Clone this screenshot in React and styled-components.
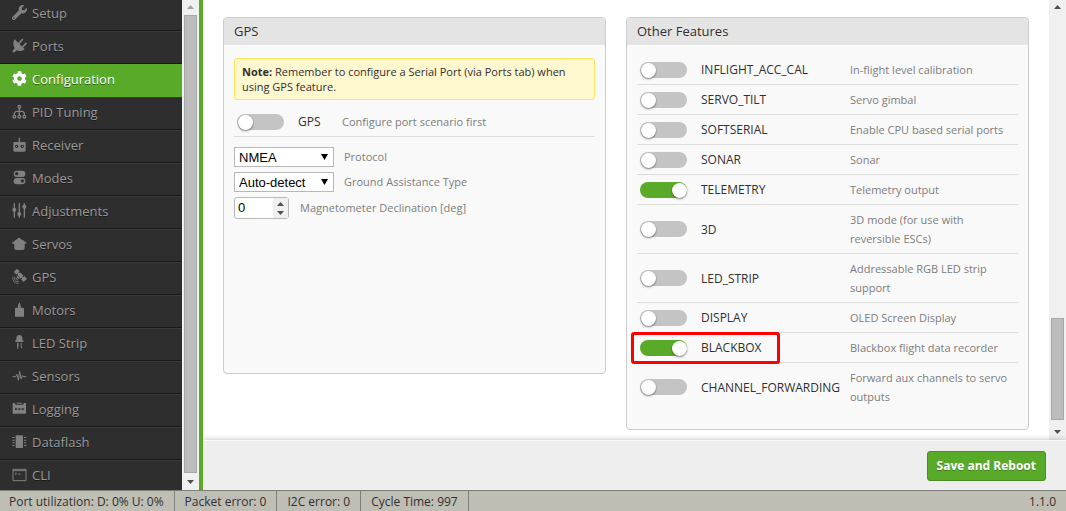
import React, { useState } from "react";
import styled, { createGlobalStyle } from "styled-components";
import { FaWrench, FaCog } from "react-icons/fa";

const GlobalStyle = createGlobalStyle`
  * {
    box-sizing: border-box;
  }

  body {
    margin: 0;
    font-family: "Open Sans", "Noto Sans", sans-serif;
    font-size: 12px;
    color: #303030;
    background: #fff;
  }
`;

const Page = styled.div`
  display: flex;
  flex-direction: column;
  height: 100vh;
  overflow: hidden;
`;

const Main = styled.div`
  display: flex;
  flex: 1;
  min-height: 0;
`;

const Sidebar = styled.div`
  display: flex;
  flex: none;
  border-right: 4px solid #59aa29;
`;

const Nav = styled.nav`
  width: 182px;
  overflow: hidden;
  background: #2e2e2e;
`;

const NavList = styled.ul`
  margin: -2px 0 0;
  padding: 0;
  list-style: none;
`;

const NavLink = styled.a`
  display: flex;
  align-items: center;
  gap: 5px;
  height: 33px;
  padding: 0 12px 4px;
  border-top: 1px solid ${props => (props.$active ? "#59aa29" : "#3b3b3b")};
  border-bottom: 1px solid ${props => (props.$active ? "#59aa29" : "#1a1a1a")};
  background: ${props => (props.$active ? "#59aa29" : "#2e2e2e")};
  color: ${props => (props.$active ? "#fff" : "#999")};
  font-size: 13px;
  text-decoration: none;
  text-shadow: 0 1px rgba(0, 0, 0, 0.45);

  svg {
    flex: none;
    width: 15px;
    height: 15px;
    color: ${props => (props.$active ? "#fff" : "#808080")};
  }
`;

const ScrollColumn = styled.div`
  display: flex;
  flex: none;
  flex-direction: column;
  width: 17px;
  background: #f0f0f0;
`;

const ScrollArrow = styled.svg`
  flex: none;
  width: 17px;
  height: 15px;
  fill: ${props => (props.$disabled ? "#a3a3a3" : "#505050")};
`;

const ScrollTrack = styled.div`
  display: flex;
  flex: 1;
  flex-direction: column;
  padding: 0 2px;
`;

const ScrollSpace = styled.div`
  flex: ${props => props.$size};
`;

const ScrollThumb = styled.div`
  flex: ${props => props.$size};
  border: 1px solid #a8a8a8;
  background: #bcbcbc;
`;

const Content = styled.main`
  display: flex;
  flex: 1;
  flex-direction: column;
  min-width: 0;
`;

const ContentScroll = styled.div`
  display: flex;
  flex: 1;
  min-height: 0;
`;

const Columns = styled.div`
  display: grid;
  flex: 1;
  grid-template-columns: 1fr 1fr;
  align-items: start;
  padding-top: 17px;
  overflow: hidden;
`;

const Panel = styled.section`
  margin: 0 20px 0 ${props => (props.$first ? "20px" : "0")};
  min-height: 357px;
  border: 1px solid #ccc;
  border-radius: 4px;
  background: #f9f9f9;
`;

const PanelTitle = styled.h2`
  margin: 0;
  padding: 0 10px;
  border-radius: 3px 3px 0 0;
  background: #e4e4e4;
  font-size: 13px;
  font-weight: 400;
  line-height: 27px;
`;

const PanelBody = styled.div`
  padding: ${props => (props.$note ? "13px" : "10px")} 10px 18px;
`;

const Note = styled.p`
  margin: 0 0 7px;
  padding: 5px 7px;
  border: 1px solid #ffe55f;
  border-radius: 3px;
  background: #fff7cd;
  font-size: 11px;
  line-height: 15px;
`;

const FeatureTable = styled.table`
  width: 100%;
  border-collapse: separate;
  border-spacing: 0;
  table-layout: fixed;

  td {
    position: relative;
    padding: 5px 0;
    border-bottom: 1px solid #ddd;
    line-height: 19px;
    vertical-align: middle;
  }

  td:last-child {
    padding-right: 5px;
  }

  tr:last-child td {
    border-bottom: ${props => (props.$closed ? "1px solid #ddd" : "0")};
  }
`;

const Col = styled.col`
  width: ${props => props.$width};
`;

const FeatureName = styled.label`
  display: block;
  font-size: 12px;
`;

const Hint = styled.span`
  color: #7d7d7d;
  font-size: 11px;
`;

const Switch = styled.input.attrs({ type: "checkbox" })`
  appearance: none;
  display: block;
  width: 47px;
  height: 16px;
  margin: 0 3px;
  padding: 1px 0 0 1px;
  border-radius: 8px;
  background: #c4c4c4;

  &::before {
    content: "";
    display: block;
    width: 15px;
    height: 15px;
    border-radius: 50%;
    background: #fff;
    box-shadow: 0 1px 2px rgba(0, 0, 0, 0.5);
  }

  &:checked {
    background: #59aa29;
  }

  &:checked::before {
    margin-left: auto;
  }
`;

const Highlight = styled.span`
  position: absolute;
  top: -1px;
  left: -6px;
  z-index: 1;
  width: 149px;
  height: 32px;
  border: 3px solid #ff0000;
  border-radius: 3px;
  pointer-events: none;
`;

const Fields = styled.div`
  display: flex;
  flex-direction: column;
  gap: 5px;
  padding-top: 10px;
`;

const Field = styled.label`
  display: flex;
  align-items: center;
  gap: ${props => (props.$number ? "11px" : "10px")};

  ${Hint} {
    padding-bottom: 2px;
  }
`;

const Control = styled.span`
  position: relative;
  display: flex;
`;

const Select = styled.select`
  appearance: none;
  width: 100px;
  height: 20px;
  padding: 0 4px;
  border: 1px solid #b8b8b8;
  border-radius: 0;
  background: #fff;
  color: #000;
  font: 13px "Liberation Sans", Arial, sans-serif;
`;

const SelectArrow = styled.svg`
  position: absolute;
  top: 7px;
  right: 6px;
  width: 7px;
  height: 6px;
  pointer-events: none;
`;

const NumberInput = styled.input.attrs({ type: "number" })`
  appearance: textfield;
  width: 55px;
  height: 22px;
  padding: 0 16px 2px 3px;
  border: 1px solid #b8b8b8;
  border-radius: 3px;
  background: #fff;
  color: #000;
  font: 13px "Liberation Sans", Arial, sans-serif;

  &::-webkit-inner-spin-button {
    display: none;
  }
`;

const Spinner = styled.svg`
  position: absolute;
  top: 1px;
  right: 1px;
  width: 15px;
  height: 20px;
  background: #f0f0f0;
  pointer-events: none;
`;

const Toolbar = styled.div`
  position: relative;
  display: flex;
  flex: none;
  align-items: center;
  justify-content: flex-end;
  height: 50px;
  padding: 0 20px;
  border-top: 1px solid #fafafa;
  background: #eee;
  box-shadow: 0 -1px 5px rgba(0, 0, 0, 0.2);
  clip-path: inset(-8px 0 0 0);
`;

const SaveButton = styled.button`
  height: 30px;
  padding: 0 9px 1px;
  border: 1px solid #4b8e23;
  border-radius: 3px;
  background: #59aa29;
  color: #fff;
  font: 700 12px "Open Sans", "Noto Sans", sans-serif;
  text-shadow: 0 1px rgba(0, 0, 0, 0.25);
`;

const StatusBar = styled.footer`
  display: flex;
  flex: none;
  height: 21px;
  border-top: 1px solid #7d7d79;
  background: #bfbeb5;
  line-height: 21px;
`;

const StatusCell = styled.span`
  padding: 0 10px;
  border-right: 1px solid #7d7d79;

  &:first-child {
    padding-left: 9px;
  }
`;

const Version = styled.span`
  margin-left: auto;
  padding-right: 10px;
`;

const Icon = ({ children }) => (
  <svg viewBox="0 0 45 45" fill="currentColor" aria-hidden="true">
    {children}
  </svg>
);

const PortsIcon = () => (
  <Icon>
    <path d="M8 4L38 34L34 37C27 40 20 40 14 37L6 44L1 40L8 31C4 24 3 16 5 9Z" />
    <path d="M21 16L31 5M32 27L42 16" stroke="currentColor" strokeWidth="5" strokeLinecap="round" />
  </Icon>
);

const PidIcon = () => (
  <Icon>
    <g fill="none" stroke="currentColor" strokeWidth="4">
      <circle cx="22" cy="8" r="4" />
      <path d="M22 12V33M7 33V27L12 22H32L37 27V33" />
      <circle cx="7" cy="38" r="4" />
      <circle cx="22" cy="38" r="4" />
      <circle cx="37" cy="38" r="4" />
    </g>
  </Icon>
);

const ReceiverIcon = () => (
  <Icon>
    <path d="M20 2H24V15H38Q41 15 41 19V40Q41 44 37 44H8Q4 44 4 40V19Q4 15 8 15H20Z" />
    <g fill="#2e2e2e">
      <circle cx="14" cy="28" r="5" />
      <circle cx="31" cy="28" r="5" />
    </g>
    <circle cx="14" cy="28" r="2" />
    <circle cx="31" cy="28" r="2" />
  </Icon>
);

const ModesIcon = () => (
  <Icon>
    <rect x="5" y="2" width="35" height="19" rx="9" />
    <rect x="5" y="24" width="35" height="19" rx="9" />
    <circle cx="14" cy="11" r="5" fill="#2e2e2e" />
    <circle cx="31" cy="33" r="5" fill="#2e2e2e" />
  </Icon>
);

const AdjustmentsIcon = () => (
  <Icon>
    <path d="M5 1H9V44H5zM20 1H24V44H20zM35 1H39V44H35z" />
    <circle cx="7" cy="20" r="6" />
    <circle cx="22" cy="33" r="6" />
    <circle cx="37" cy="11" r="6" />
  </Icon>
);

const ServosIcon = () => (
  <Icon>
    <path d="M17 9V6H25V9L37 14V17H43V23H38V36Q38 42 32 42H13Q7 42 7 36V23H1V17H7V14Z" />
  </Icon>
);

const GpsIcon = () => (
  <Icon>
    <g transform="rotate(45 25 19)">
      <rect x="18" y="13" width="14" height="12" />
      <rect x="4" y="12" width="11" height="14" />
      <rect x="35" y="12" width="11" height="14" />
      <rect x="14" y="17" width="23" height="4" />
      <path d="M19 26H31L28 31H22Z" />
    </g>
    <path
      d="M13 26Q12 33 19 33M8 24Q6 38 20 38M3 23Q0 43 20 43"
      fill="none"
      stroke="currentColor"
      strokeWidth="2.5"
    />
  </Icon>
);

const MotorsIcon = () => (
  <Icon>
    <path d="M22 1L26 10V17H33Q36 17 36 21V44H9V21Q9 17 12 17H18V10Z" />
  </Icon>
);

const LedIcon = () => (
  <Icon>
    <path d="M13 16V9Q14 0 22 0T31 9V16H34V21H10V16ZM16 23H19V42H16zM26 23H29V35L32 40H28L26 36z" />
    <path d="M16 23H19V33L15 38V31Z" />
  </Icon>
);

const SensorsIcon = () => (
  <Icon>
    <path
      d="M1 26H11L15 19L19 37L23 10L27 33L31 22L33 26H43"
      fill="none"
      stroke="currentColor"
      strokeWidth="3"
      strokeLinejoin="round"
    />
  </Icon>
);

const LoggingIcon = () => (
  <Icon>
    <path d="M2 6H8L11 11H33L36 6H42V38H2Z" />
    <path d="M14 5H30V8H14Z" />
    <path d="M9 22H15V27H9zM19 22H25V27H19zM29 22H35V27H29z" fill="#2e2e2e" />
  </Icon>
);

const DataflashIcon = () => (
  <Icon>
    <rect x="11" y="4" width="22" height="38" rx="2" />
    <path d="M1 9H8V12H1zM1 17H8V20H1zM1 25H8V28H1zM1 33H8V36H1zM36 9H43V12H36zM36 17H43V20H36zM36 25H43V28H36zM36 33H43V36H36z" />
  </Icon>
);

const CliIcon = () => (
  <Icon>
    <path d="M3 7H42V41H3Z M3 11H42" fill="none" stroke="currentColor" strokeWidth="3" />
    <path d="M9 17L14 20L9 24M18 21H26" fill="none" stroke="currentColor" strokeWidth="2.5" />
  </Icon>
);

const tabs = [
  { name: "Setup", icon: FaWrench },
  { name: "Ports", icon: PortsIcon },
  { name: "Configuration", icon: FaCog },
  { name: "PID Tuning", icon: PidIcon },
  { name: "Receiver", icon: ReceiverIcon },
  { name: "Modes", icon: ModesIcon },
  { name: "Adjustments", icon: AdjustmentsIcon },
  { name: "Servos", icon: ServosIcon },
  { name: "GPS", icon: GpsIcon },
  { name: "Motors", icon: MotorsIcon },
  { name: "LED Strip", icon: LedIcon },
  { name: "Sensors", icon: SensorsIcon },
  { name: "Logging", icon: LoggingIcon },
  { name: "Dataflash", icon: DataflashIcon },
  { name: "CLI", icon: CliIcon }
];

const gpsFeatures = [{ name: "GPS", hint: "Configure port scenario first" }];

const otherFeatures = [
  { name: "INFLIGHT_ACC_CAL", hint: "In-flight level calibration" },
  { name: "SERVO_TILT", hint: "Servo gimbal" },
  { name: "SOFTSERIAL", hint: "Enable CPU based serial ports" },
  { name: "SONAR", hint: "Sonar" },
  { name: "TELEMETRY", hint: "Telemetry output", enabled: true },
  { name: "3D", hint: "3D mode (for use with reversible ESCs)" },
  { name: "LED_STRIP", hint: "Addressable RGB LED strip support" },
  { name: "DISPLAY", hint: "OLED Screen Display" },
  { name: "BLACKBOX", hint: "Blackbox flight data recorder", enabled: true, highlight: true },
  { name: "CHANNEL_FORWARDING", hint: "Forward aux channels to servo outputs" }
];

const status = ["Port utilization: D: 0% U: 0%", "Packet error: 0", "I2C error: 0", "Cycle Time: 997"];

const Scrollbar = ({ before, thumb, after, atTop }) => (
  <ScrollColumn aria-hidden="true">
    <ScrollArrow viewBox="0 0 17 15" $disabled={atTop}>
      <path d="M5 9L8.5 5L12 9Z" />
    </ScrollArrow>
    <ScrollTrack>
      <ScrollSpace $size={before} />
      <ScrollThumb $size={thumb} />
      <ScrollSpace $size={after} />
    </ScrollTrack>
    <ScrollArrow viewBox="0 0 17 15">
      <path d="M5 5L8.5 9L12 5Z" />
    </ScrollArrow>
  </ScrollColumn>
);

const Features = ({ features, nameWidth, closed }) => {
  const [enabled, setEnabled] = useState(features.filter(f => f.enabled).map(f => f.name));

  const toggle = name =>
    setEnabled(enabled.includes(name) ? enabled.filter(n => n !== name) : [...enabled, name]);

  return (
    <FeatureTable $closed={closed}>
      <colgroup>
        <Col $width="64px" />
        <Col $width={nameWidth} />
        <Col $width="auto" />
      </colgroup>
      <tbody>
        {features.map(({ name, hint, highlight }) => (
          <tr key={name}>
            <td>
              <Switch id={name} checked={enabled.includes(name)} onChange={() => toggle(name)} />
              {highlight && <Highlight />}
            </td>
            <td>
              <FeatureName htmlFor={name}>{name}</FeatureName>
            </td>
            <td>
              <Hint as="div">{hint}</Hint>
            </td>
          </tr>
        ))}
      </tbody>
    </FeatureTable>
  );
};

const SelectField = ({ label, options }) => (
  <Field>
    <Control>
      <Select>
        {options.map(option => (
          <option key={option}>{option}</option>
        ))}
      </Select>
      <SelectArrow viewBox="0 0 7 6">
        <path d="M0 0H7L3.5 6Z" />
      </SelectArrow>
    </Control>
    <Hint>{label}</Hint>
  </Field>
);

const App = () => (
  <Page>
    <GlobalStyle />
    <Main>
      <Sidebar>
        <Nav>
          <NavList>
            {tabs.map(({ name, icon: TabIcon }) => (
              <li key={name}>
                <NavLink href="#" $active={name === "Configuration"}>
                  <TabIcon />
                  {name}
                </NavLink>
              </li>
            ))}
          </NavList>
        </Nav>
        <Scrollbar before={0} thumb={458} after={2} atTop />
      </Sidebar>
      <Content>
        <ContentScroll>
          <Columns>
            <Panel $first>
              <PanelTitle>GPS</PanelTitle>
              <PanelBody $note>
                <Note>
                  <b>Note:</b> Remember to configure a Serial Port (via Ports tab) when using GPS feature.
                </Note>
                <Features features={gpsFeatures} nameWidth="44px" closed />
                <Fields>
                  <SelectField label="Protocol" options={["NMEA", "UBLOX"]} />
                  <SelectField label="Ground Assistance Type" options={["Auto-detect", "None"]} />
                  <Field $number>
                    <Control>
                      <NumberInput defaultValue={0} />
                      <Spinner viewBox="0 0 15 20" fill="#505050">
                        <path d="M4 8L7.5 4L11 8ZM4 13L7.5 17L11 13Z" />
                      </Spinner>
                    </Control>
                    <Hint>Magnetometer Declination [deg]</Hint>
                  </Field>
                </Fields>
              </PanelBody>
            </Panel>
            <Panel>
              <PanelTitle>Other Features</PanelTitle>
              <PanelBody>
                <Features features={otherFeatures} nameWidth="149px" />
              </PanelBody>
            </Panel>
          </Columns>
          <Scrollbar before={304} thumb={101} after={5} />
        </ContentScroll>
        <Toolbar>
          <SaveButton type="button">Save and Reboot</SaveButton>
        </Toolbar>
      </Content>
    </Main>
    <StatusBar>
      {status.map(text => (
        <StatusCell key={text}>{text}</StatusCell>
      ))}
      <Version>1.1.0</Version>
    </StatusBar>
  </Page>
);

export default App;
